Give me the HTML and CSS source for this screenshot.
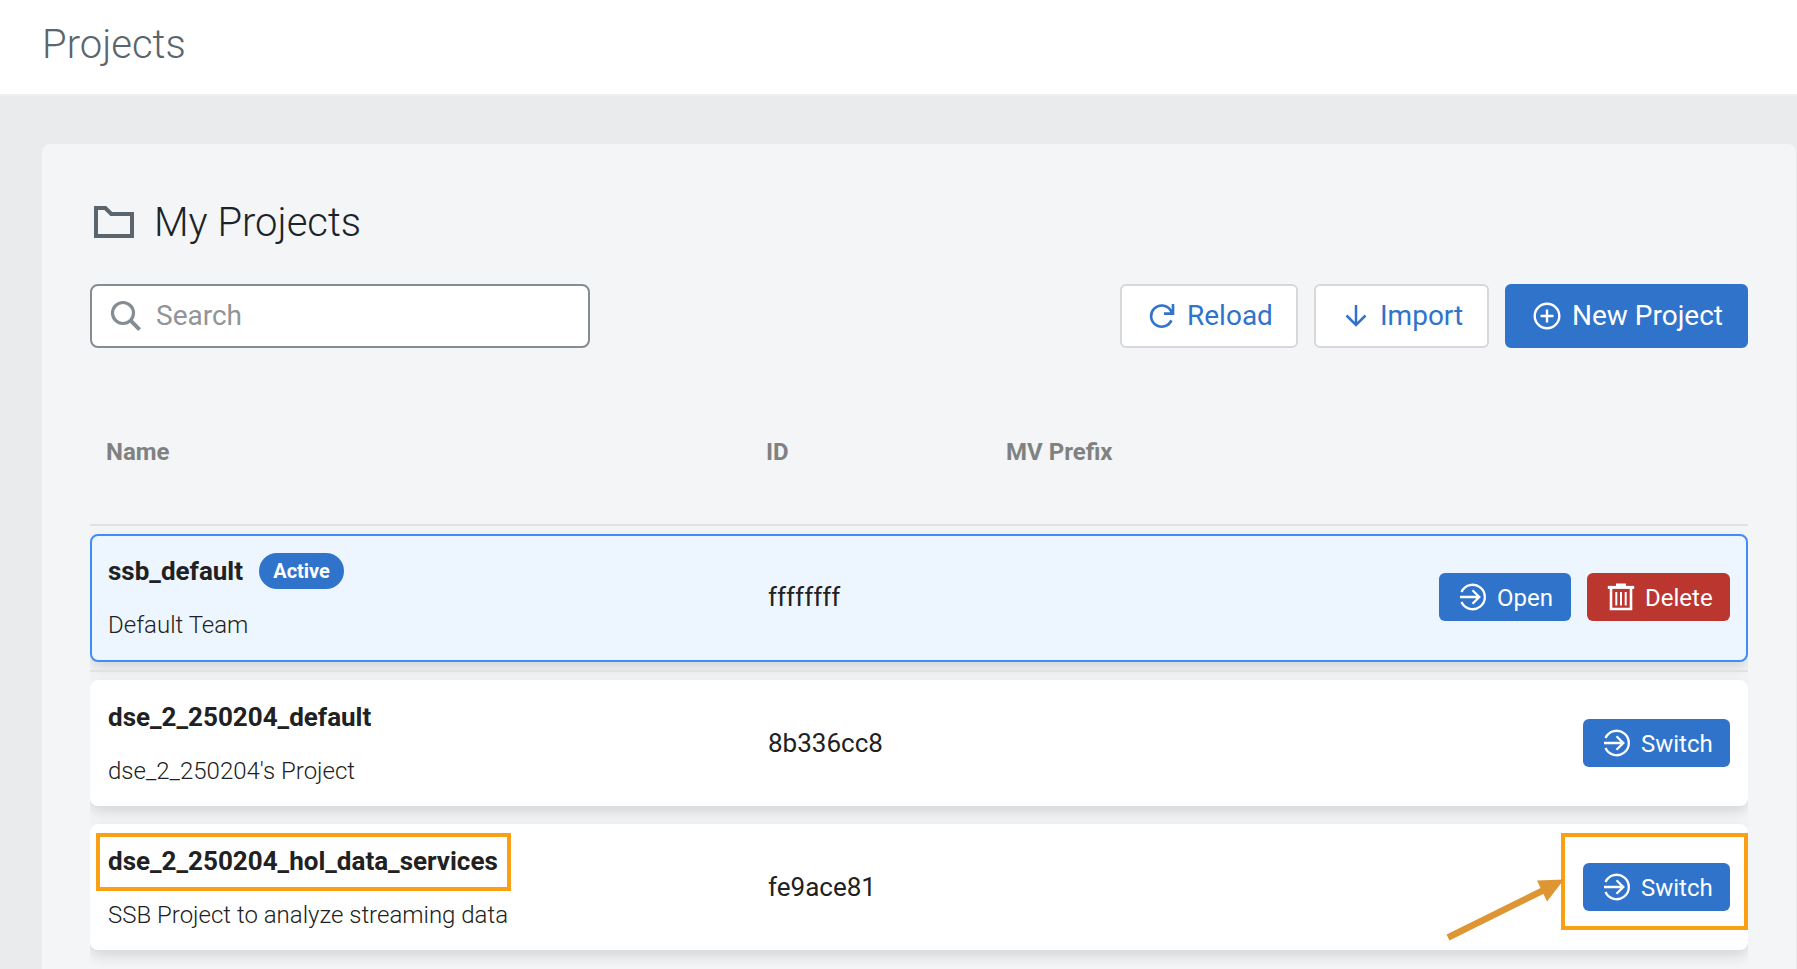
FILE: index.html
```html
<!DOCTYPE html>
<html lang="en">
<head>
<meta charset="utf-8">
<title>Projects</title>
<link rel="stylesheet" href="styles.css">
</head>
<body>
<svg class="defs" width="0" height="0" aria-hidden="true">
  <symbol id="enter" viewBox="0 0 28 28"><path d="M2.5 9A12.2 12.2 0 1 1 2.5 19M1 14H20M13.5 7.2L20.3 14L13.5 20.8" fill="none" stroke="currentColor" stroke-width="2.3"/></symbol>
</svg>
<header class="topbar"><h1 class="page-title">Projects</h1></header>
<main class="content">
  <section class="panel">
    <div class="panel-head">
      <svg class="folder" width="40" height="32" viewBox="0 0 40 32"><path d="M2 2H11.3L17.3 8H38V30H2Z" fill="none" stroke="currentColor" stroke-width="4"/></svg>
      <h2 class="panel-title">My Projects</h2>
    </div>
    <div class="toolbar">
      <div class="search">
        <svg width="32" height="32" viewBox="0 0 32 32"><circle cx="13" cy="13" r="10.5" fill="none" stroke="currentColor" stroke-width="3.2"/><path d="M20.2 20.2L29.6 29.6" stroke="currentColor" stroke-width="4"/></svg>
        <span class="search-text">Search</span>
      </div>
      <div class="actions">
        <button class="btn btn-reload">
          <svg width="26" height="26" viewBox="0 0 26 26"><path d="M22.4 17.4A10.6 10.6 0 1 1 21.4 7L23.4 10.2M24 1V10.6H15" fill="none" stroke="currentColor" stroke-width="2.6"/></svg>
          <span>Reload</span>
        </button>
        <button class="btn btn-import">
          <svg width="22" height="22" viewBox="0 0 22 22"><path d="M11 0V20M1.5 10.5L11 20L20.5 10.5" fill="none" stroke="currentColor" stroke-width="2.5"/></svg>
          <span>Import</span>
        </button>
        <button class="btn btn-new">
          <svg width="28" height="36" viewBox="0 0 28 36"><g fill="none" stroke="currentColor" stroke-width="2.4"><circle cx="14" cy="18" r="12.3"/><path d="M14 11.5V24.5M7.5 18H20.5"/></g></svg>
          <span>New Project</span>
        </button>
      </div>
    </div>
    <div class="table">
      <div class="thead"><span>Name</span><span>ID</span><span>MV Prefix</span></div>
      <div class="row row-active">
        <div class="info"><div class="name"><b>ssb_default</b><span class="badge">Active</span></div><div class="desc">Default Team</div></div>
        <div class="id">ffffffff</div>
        <div class="row-actions">
          <button class="sbtn open"><svg width="28" height="28"><use href="#enter"/></svg><span>Open</span></button>
          <button class="sbtn delete"><svg width="28" height="28" viewBox="0 0 28 28"><g fill="none" stroke="currentColor"><path d="M9 1.8H19" stroke-width="2.6"/><path d="M.8 4.4H27.2" stroke-width="3"/><path d="M4 5V26H24V5" stroke-width="2.6"/><path d="M9.3 9V22.5M14 9V22.5M18.7 9V22.5" stroke-width="2"/></g></svg><span>Delete</span></button>
        </div>
      </div>
      <div class="divider"></div>
      <div class="row">
        <div class="info"><div class="name"><b>dse_2_250204_default</b></div><div class="desc">dse_2_250204's Project</div></div>
        <div class="id">8b336cc8</div>
        <div class="row-actions"><button class="sbtn switch"><svg width="28" height="28"><use href="#enter"/></svg><span>Switch</span></button></div>
      </div>
      <div class="row row-last">
        <div class="info"><div class="name"><b>dse_2_250204_hol_data_services</b></div><div class="desc">SSB Project to analyze streaming data</div></div>
        <div class="id">fe9ace81</div>
        <div class="row-actions"><button class="sbtn switch"><svg width="28" height="28"><use href="#enter"/></svg><span>Switch</span></button></div>
        <div class="mark mark-name"></div>
        <div class="mark mark-switch"></div>
        <svg class="arrow" width="124" height="64" viewBox="0 0 124 64"><path d="M5 59.5L103 11" stroke="#de9534" stroke-width="6.5"/><path d="M121 1.5L94 2.5L104 23.5Z" fill="#de9534"/></svg>
      </div>
    </div>
  </section>
</main>
</body>
</html>
```
FILE: styles.css
```css
* { box-sizing: border-box; }
body {
  margin: 0;
  height: 969px;
  overflow: hidden;
  background: #e9ebec;
  color: #212121;
  font-family: Roboto, "Liberation Sans", sans-serif;
}
h1, h2 { margin: 0; font-size: 40px; font-weight: 300; line-height: 50px; }
svg { display: block; flex: none; }
.defs { position: absolute; }
.topbar {
  height: 96px;
  padding: 20px 42px 0;
  background: #fff;
  border-bottom: 2px solid #f0f0f0;
}
.page-title { color: #5a656d; }
.content { padding: 48px 1px 0 42px; }
.panel {
  height: 840px;
  padding: 54px 48px 0;
  background: #f3f5f7;
  border-radius: 8px;
}
.panel-head { display: flex; align-items: center; height: 48px; padding-left: 4px; gap: 20px; }
.folder { color: #5a656d; }
.panel-title { padding-top: 2px; color: #1b2329; }
.toolbar { display: flex; justify-content: space-between; margin-top: 38px; }
.search {
  display: flex;
  align-items: center;
  width: 500px;
  height: 64px;
  padding-left: 18px;
  gap: 14px;
  background: #fff;
  border: 2px solid #848d94;
  border-radius: 8px;
  color: #848d94;
}
.search-text { padding-bottom: 2px; color: #919498; font-size: 28px; }
.actions { display: flex; gap: 16px; }
button { font-family: inherit; margin: 0; }
.btn {
  display: flex;
  align-items: center;
  height: 64px;
  padding: 0 0 0 27px;
  border: 2px solid #d6d8dc;
  border-radius: 6px;
  background: #fff;
  color: #3073cb;
  font-size: 28px;
  white-space: nowrap;
}
.btn span { padding-bottom: 2px; }
.btn-reload { width: 178px; gap: 12px; }
.btn-import { width: 175px; gap: 13px; padding-left: 29px; }
.btn-new { width: 243px; gap: 11px; padding-left: 26px; background: #3073cb; border-color: #3073cb; color: #fff; }
.table { margin: 44px 0 0; overflow: hidden; height: 577px; }
.thead {
  display: grid;
  grid-template-columns: 660px 240px 1fr;
  height: 134px;
  padding: 46px 16px 0;
  border-bottom: 2px solid #dfe1e3;
  margin-bottom: 8px;
  color: #808282;
  font-size: 24px;
  font-weight: 700;
  line-height: 28px;
}
.row {
  position: relative;
  display: grid;
  grid-template-columns: 660px 1fr auto;
  align-items: center;
  height: 126px;
  padding: 0 18px;
  border-radius: 8px;
  background: #fff;
  box-shadow: 0 6px 14px rgba(0, 0, 0, .13);
}
.row-active {
  height: 128px;
  padding: 0 16px 2px;
  border: 2px solid #408cf8;
  background: #edf6fe;
}
.divider { position: relative; height: 2px; margin: 8px 0; background: #dfe1e3; }
.row-last { margin-top: 18px; }
.name { display: flex; align-items: center; gap: 16px; height: 36px; font-size: 26px; }
.badge {
  height: 36px;
  width: 85px;
  border-radius: 18px;
  background: #3073cb;
  color: #fff;
  font-size: 20px;
  font-weight: 700;
  line-height: 36px;
  text-align: center;
}
.desc { margin-top: 20px; font-size: 24px; font-weight: 300; line-height: 32px; }
.id { font-size: 26px; }
.row-actions { display: flex; gap: 16px; }
.sbtn {
  display: flex;
  align-items: center;
  height: 48px;
  padding: 0 0 0 20px;
  gap: 10px;
  border: 0;
  border-radius: 6px;
  background: #3073cb;
  color: #fff;
  font-size: 24px;
  font-weight: 400;
}
.sbtn span { padding-top: 1px; }
.open { width: 132px; }
.delete { width: 143px; background: #bc3630; }
.switch { width: 147px; }
.mark { position: absolute; border: 4px solid #fb9f15; }
.mark-name { left: 6px; top: 9px; width: 415px; height: 58px; }
.mark-switch { right: 0; top: 9px; width: 187px; height: 97px; }
.arrow { position: absolute; right: 181px; top: 54px; }
```
